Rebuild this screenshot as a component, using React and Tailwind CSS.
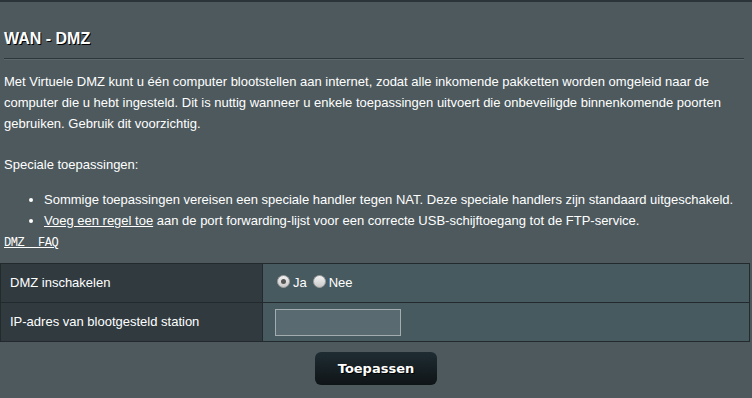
import React, { useState } from "react";

const Radio = ({ checked, onClick, label }) => (
  <label className="flex items-center cursor-pointer" onClick={onClick}>
    <span className="relative inline-block w-[13px] h-[13px] rounded-full bg-gradient-to-b from-[#f2f2f2] to-[#c9c9c9] border border-[#9a9a9a] mr-[3px] -mt-[3px]">
      {checked && (
        <span className="absolute left-[3px] top-[3px] w-[5px] h-[5px] rounded-full bg-[#555]" />
      )}
    </span>
    <span>{label}</span>
  </label>
);

const App = () => {
  const [enabled, setEnabled] = useState(true);
  const [ip, setIp] = useState("");

  return (
    <div
      className="w-[752px] h-[398px] bg-[#4d595d] text-white text-[13px] overflow-hidden"
      style={{ fontFamily: '"Liberation Sans", Arial, sans-serif' }}
    >
      <div className="h-[2px] bg-[#2b3438]" />
      <div className="px-[4px]">
        <h1 className="text-[16px] font-bold mt-[27px] leading-[20px] [text-shadow:1px_1px_0_#000]">
          WAN - DMZ
        </h1>
        <div className="mt-[9px] mr-[4px] h-[2px] border-t border-[#2d373b] bg-[#5b676c]" />
        <p className="mt-[11px] leading-[21px] pr-[8px]">
          Met Virtuele DMZ kunt u één computer blootstellen aan internet, zodat alle inkomende pakketten worden omgeleid naar de
          computer die u hebt ingesteld. Dit is nuttig wanneer u enkele toepassingen uitvoert die onbeveiligde binnenkomende poorten
          gebruiken. Gebruik dit voorzichtig.
        </p>
        <p className="mt-[20px] leading-[21px]">Speciale toepassingen:</p>
        <ul className="mt-[14px] pl-[40px] list-disc leading-[21px]">
          <li>Sommige toepassingen vereisen een speciale handler tegen NAT. Deze speciale handlers zijn standaard uitgeschakeld.</li>
          <li>
            <a href="#" className="underline">Voeg een regel toe</a> aan de port forwarding-lijst voor een correcte USB-schijftoegang tot de FTP-service.
          </li>
        </ul>
        <a
          href="#"
          className="block mt-[5px] underline text-[12px] leading-[15px] w-max tracking-[-0.4px]"
          style={{ fontFamily: '"Liberation Mono", "Courier New", monospace' }}
        >
          DMZ&nbsp;&nbsp;FAQ
        </a>
      </div>

      <table className="mt-[12px] w-[750px] border-collapse">
        <tbody>
          <tr className="h-[39px]">
            <th className="w-[262px] bg-[#313b3f] border border-[#222a2d] text-left font-normal pl-[9px]">
              DMZ inschakelen
            </th>
            <td className="bg-[#475a5f] border border-[#222a2d] pl-[14px]">
              <div className="flex items-center gap-[6px]">
                <Radio checked={enabled} onClick={() => setEnabled(true)} label="Ja" />
                <Radio checked={!enabled} onClick={() => setEnabled(false)} label="Nee" />
              </div>
            </td>
          </tr>
          <tr className="h-[39px]">
            <th className="bg-[#313b3f] border border-[#222a2d] text-left font-normal pl-[9px]">
              IP-adres van blootgesteld station
            </th>
            <td className="bg-[#475a5f] border border-[#222a2d] pl-[12px]">
              <input
                value={ip}
                onChange={(e) => setIp(e.target.value)}
                className="block w-[126px] h-[27px] bg-[#596b71] border border-[#a3adb0] text-white px-[3px] outline-none"
              />
            </td>
          </tr>
        </tbody>
      </table>

      <div className="flex justify-center mt-[10px]">
        <button
          className="w-[122px] h-[33px] rounded-[6px] bg-gradient-to-b from-[#1f2d33] to-[#0f1417] text-white font-bold text-[13px] [text-shadow:1px_1px_0_#000]"
          style={{ fontFamily: '"DejaVu Sans", Verdana, sans-serif' }}
        >
          Toepassen
        </button>
      </div>
    </div>
  );
};

export default App;
